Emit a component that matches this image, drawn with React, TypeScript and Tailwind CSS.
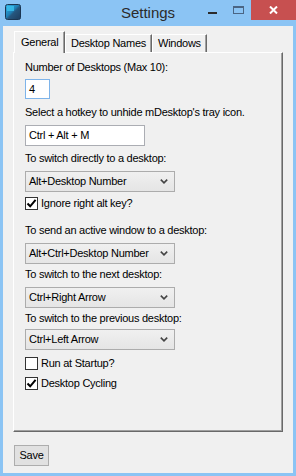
import type { ReactNode } from "react";

const FONT = "font-['Liberation_Sans',Arial,sans-serif]";

function Label({ children, className = "" }: { children: ReactNode; className?: string }) {
  return <div className={`h-[13px] text-[11px] leading-[13px] tracking-[-0.25px] text-black ${className}`}>{children}</div>;
}

function Combo({ value, className = "" }: { value: string; className?: string }) {
  return (
    <div
      className={`flex h-[21px] w-[150px] items-center border border-[#acacac] bg-gradient-to-b from-[#f0f0f0] to-[#e5e5e5] pl-[3px] pr-[5px] ${className}`}
    >
      <span className="flex-1 text-[11px] leading-[13px] tracking-[-0.25px] text-black">{value}</span>
      <svg width="8" height="5" viewBox="0 0 8 5" className="mr-[1px]">
        <path d="M0.8 0.6 L4 3.8 L7.2 0.6" fill="none" stroke="#444" strokeWidth="1.6" />
      </svg>
    </div>
  );
}

function Check({ label, checked, className = "" }: { label: string; checked?: boolean; className?: string }) {
  return (
    <div className={`flex h-[15px] items-center gap-[3px] ${className}`}>
      <div className="flex h-[13px] w-[13px] items-center justify-center border border-[#333] bg-white">
        {checked ? (
          <svg width="11" height="11" viewBox="0 0 11 11">
            <path d="M1.5 5.5 L4.2 8.3 L9.6 1.8" fill="none" stroke="#000" strokeWidth="2" />
          </svg>
        ) : null}
      </div>
      <span className="text-[11px] leading-[13px] tracking-[-0.25px] text-black">{label}</span>
    </div>
  );
}

function Tab({ label, active, width, pad }: { label: string; active?: boolean; width: number; pad: string }) {
  return (
    <div
      style={{ width }}
      className={`border-l border-t border-r border-l-white border-t-white border-r-[#696969] shadow-[inset_-1px_0_0_#a0a0a0] text-[11px] leading-[13px] tracking-[-0.25px] text-black ${pad} ${
        active ? "relative z-10 -mb-px h-[22px] bg-[#f0f0f0] pt-[4px]" : "h-[18px] pt-[2px]"
      }`}
    >
      {label}
    </div>
  );
}

export default function App() {
  return (
    <div className={`flex h-[476px] w-[296px] flex-col bg-[#8bc4f4] ${FONT}`}>
      {/* title bar */}
      <div className="grid h-[26px] grid-cols-[1fr_auto_1fr]">
        <div className="pl-[5px] pt-[4px]">
          <svg width="16" height="16" viewBox="0 0 16 16">
            <defs>
              <linearGradient id="ic" x1="0" y1="0" x2="1" y2="1">
                <stop offset="0" stopColor="#2fb2e6" />
                <stop offset="0.45" stopColor="#1f7fb5" />
                <stop offset="0.55" stopColor="#26577f" />
                <stop offset="1" stopColor="#1d3c5c" />
              </linearGradient>
            </defs>
            <rect x="0.5" y="0.5" width="15" height="15" rx="2" fill="url(#ic)" stroke="#1b3652" />
            <rect x="2" y="2" width="7" height="5" fill="#39c0ee" opacity="0.8" />
          </svg>
        </div>
        <div className="pt-[4px] text-[15px] leading-[18px] text-[#2b2b2b]">Settings</div>
        <div className="flex justify-end">
          <div className="flex h-[20px] w-[26px] items-center justify-center pt-[5px]">
            <div className="h-[2px] w-[9px] bg-[#2b2b2b]" />
          </div>
          <div className="flex h-[20px] w-[26px] items-center justify-center">
            <div className="h-[8px] w-[11px] border border-t-2 border-[#4a6584]" />
          </div>
          <div className="flex h-[20px] w-[45px] items-center justify-center bg-[#c75050]">
            <svg width="9" height="8" viewBox="0 0 9 8">
              <path d="M1 0.5 L8 7.5 M8 0.5 L1 7.5" stroke="#fff" strokeWidth="2" />
            </svg>
          </div>
        </div>
      </div>

      {/* client area */}
      <div className="mx-[3px] mb-[3px] flex flex-1 flex-col bg-[#f0f0f0] px-[10px]">
        <div className="mt-[5px] flex items-end pl-[1px]">
          <Tab label="General" active width={51} pad="pl-[6px]" />
          <Tab label="Desktop Names" width={87} pad="pl-[5px]" />
          <Tab label="Windows" width={55} pad="pl-[5px]" />
        </div>

        <div className="flex h-[380px] flex-col border border-l-white border-t-white border-r-[#696969] border-b-[#696969] px-[11px] shadow-[inset_-1px_-1px_0_#a0a0a0]">
          <Label className="mt-[8px]">Number of Desktops (Max 10):</Label>
          <div className="mt-[5px] flex h-[20px] w-[25px] items-center border border-[#7eb4ea] bg-white pl-[3px] text-[11px] tracking-[-0.25px]">
            4
          </div>
          <Label className="mt-[7px]">Select a hotkey to unhide mDesktop's tray icon.</Label>
          <div className="mt-[6px] flex h-[21px] w-[120px] items-center border border-[#abadb3] bg-white pl-[3px] text-[11px] tracking-[-0.25px]">
            Ctrl + Alt + M
          </div>
          <Label className="mt-[6px]">To switch directly to a desktop:</Label>
          <Combo value="Alt+Desktop Number" className="mt-[6px]" />
          <Check label="Ignore right alt key?" checked className="mt-[4px]" />
          <Label className="mt-[13px]">To send an active window to a desktop:</Label>
          <Combo value="Alt+Ctrl+Desktop Number" className="mt-[6px]" />
          <Label className="mt-[4px]">To switch to the next desktop:</Label>
          <Combo value="Ctrl+Right Arrow" className="mt-[6px]" />
          <Label className="mt-[4px]">To switch to the previous desktop:</Label>
          <Combo value="Ctrl+Left Arrow" className="mt-[4px]" />
          <Check label="Run at Startup?" className="mt-[6px]" />
          <Check label="Desktop Cycling" checked className="mt-[5px]" />
        </div>

        <div className="ml-[1px] mt-[13px] flex h-[21px] w-[35px] items-center justify-center border border-[#adadad] bg-[#e1e1e1] text-[11px] tracking-[-0.25px] text-black">
          Save
        </div>
      </div>
    </div>
  );
}
